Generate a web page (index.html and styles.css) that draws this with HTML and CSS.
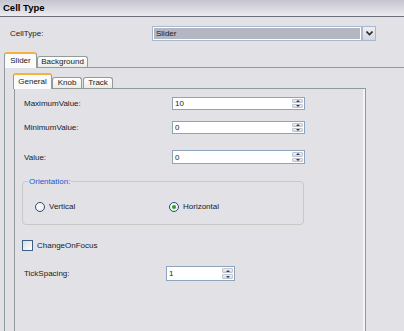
FILE: index.html
```html
<!DOCTYPE html>
<html>
<head>
<meta charset="utf-8">
<link rel="stylesheet" href="styles.css">
</head>
<body>
<div class="header">Cell Type</div>
<div class="celltype-row">
  <span class="ct-label">CellType:</span>
  <div class="combo">
    <div class="combo-field">Slider</div>
    <div class="combo-btn">
      <svg width="7" height="5" viewBox="0 0 7 5"><path d="M0.5 0.5 L3.5 3.5 L6.5 0.5" fill="none" stroke="#2b2b33" stroke-width="1.6"/></svg>
    </div>
  </div>
</div>
<div class="tabs outer-tabs">
  <div class="tab sel w-slider">Slider</div>
  <div class="tab w-bg">Background</div>
</div>
<div class="outer-page">
  <div class="tabs inner-tabs">
    <div class="tab sel w-gen">General</div>
    <div class="tab w-knob">Knob</div>
    <div class="tab w-track">Track</div>
  </div>
  <div class="inner-page">
    <div class="field-row r1">
      <span class="lbl">MaximumValue:</span>
      <div class="spin wide"><span class="val">10</span><div class="spinbtn"><span class="up"></span><span class="down"></span></div></div>
    </div>
    <div class="field-row r2">
      <span class="lbl">MinimumValue:</span>
      <div class="spin wide"><span class="val">0</span><div class="spinbtn"><span class="up"></span><span class="down"></span></div></div>
    </div>
    <div class="field-row r3">
      <span class="lbl">Value:</span>
      <div class="spin wide"><span class="val">0</span><div class="spinbtn"><span class="up"></span><span class="down"></span></div></div>
    </div>
    <div class="group">
      <span class="legend">Orientation:</span>
      <div class="radios">
        <div class="radio-item first"><span class="radio"></span><span class="rlabel">Vertical</span></div>
        <div class="radio-item"><span class="radio on"></span><span class="rlabel">Horizontal</span></div>
      </div>
    </div>
    <div class="check-row">
      <span class="checkbox"></span><span class="clabel">ChangeOnFocus</span>
    </div>
    <div class="field-row r4">
      <span class="lbl short">TickSpacing:</span>
      <div class="spin narrow"><span class="val">1</span><div class="spinbtn"><span class="up"></span><span class="down"></span></div></div>
    </div>
  </div>
</div>
</body>
</html>
```
FILE: styles.css
```css
html, body {
  margin: 0;
  padding: 0;
}
body {
  width: 404px;
  height: 331px;
  overflow: hidden;
  background: #e2e1e6;
  font-family: "Liberation Sans", Arial, sans-serif;
  font-size: 8px;
  color: #1a1a1a;
}
.header {
  height: 16px;
  line-height: 16px;
  padding-left: 3px;
  font-weight: bold;
  font-size: 9.5px;
  color: #000;
  background: linear-gradient(to bottom, #c4c4d0, #ecebf0);
  border-bottom: 1px solid #6e6e7a;
}
.celltype-row {
  display: flex;
  align-items: center;
  height: 15px;
  margin-top: 9px;
  padding-left: 10px;
}
.ct-label {
  width: 142px;
}
.combo {
  display: flex;
  width: 224px;
  height: 15px;
}
.combo-field {
  flex: 1;
  box-sizing: border-box;
  height: 15px;
  line-height: 13px;
  padding-left: 3px;
  background: #b4b6c2;
  border: 1px solid #a9b8cc;
  box-shadow: inset 0 0 0 1px #fff;
}
.combo-btn {
  box-sizing: border-box;
  width: 14px;
  height: 15px;
  border: 1px solid #a9b8cc;
  background: linear-gradient(to bottom, #eeeef3, #d6d6df);
  display: flex;
  align-items: center;
  justify-content: center;
}
.tabs {
  display: flex;
  align-items: flex-end;
  position: relative;
  z-index: 1;
}
.outer-tabs {
  margin-top: 11px;
  padding-left: 4px;
  height: 15px;
}
.tab {
  box-sizing: border-box;
  height: 11px;
  line-height: 10px;
  text-align: center;
  border: 1px solid #919b9c;
  border-bottom: none;
  border-radius: 3px 3px 0 0;
  background: linear-gradient(to bottom, #ffffff, #ecebe6);
}
.tab.sel {
  height: 16px;
  line-height: 13px;
  margin-bottom: -1px;
  border-top: 2px solid #f3b33d;
  background: #fbfbfd;
}
.w-slider { width: 33px; }
.w-bg { width: 51px; }
.w-gen { width: 39px; }
.w-knob { width: 30px; }
.w-track { width: 30px; margin-left: 1px; }
.outer-page {
  margin-left: 4px;
  border-top: 1px solid #919b9c;
  border-left: 1px solid #919b9c;
  padding-left: 9px;
  padding-top: 6px;
  height: 257px;
}
.inner-tabs {
  height: 14px;
  margin-left: -1px;
}
.inner-page {
  box-sizing: border-box;
  width: 352px;
  height: 243px;
  border: 1px solid #919b9c;
  border-bottom: none;
  box-shadow: inset -2px 0 0 #f4f4f6;
  padding-left: 9px;
  padding-top: 8px;
}
.field-row {
  display: flex;
  align-items: center;
  height: 13px;
}
.r2 { margin-top: 11px; }
.r3 { margin-top: 16px; height: 14px; }
.r4 { margin-top: 15px; height: 15px; }
.lbl {
  width: 148px;
}
.lbl.short {
  width: 142px;
}
.spin {
  box-sizing: border-box;
  display: flex;
  height: 100%;
  background: #fff;
  border: 1px solid #8ea3bc;
}
.spin.wide { width: 133px; }
.spin.narrow { width: 69px; }
.val {
  flex: 1;
  padding-left: 2px;
  display: flex;
  align-items: center;
}
.spinbtn {
  width: 11px;
  display: flex;
  flex-direction: column;
  padding: 1px;
  gap: 1px;
}
.spinbtn span {
  flex: 1;
  background: linear-gradient(to bottom, #f2f2f6, #d7d9e2);
  border: 1px solid #c0c5d2;
  border-radius: 1px;
  position: relative;
}
.spinbtn span::after {
  content: "";
  position: absolute;
  left: 50%;
  top: 50%;
  margin-left: -2px;
  margin-top: -1px;
  border-left: 2px solid transparent;
  border-right: 2px solid transparent;
}
.spinbtn .up::after {
  border-bottom: 2px solid #3a3a44;
}
.spinbtn .down::after {
  border-top: 2px solid #3a3a44;
}
.group {
  box-sizing: border-box;
  margin-top: 17px;
  margin-left: -2px;
  width: 282px;
  height: 44px;
  border: 1px solid #c8c8c4;
  border-radius: 4px;
}
.legend {
  display: block;
  width: fit-content;
  margin: -5px 0 0 5px;
  padding: 0 1px;
  line-height: 9px;
  background: #e2e1e6;
  color: #1f52d4;
}
.radios {
  display: flex;
  align-items: center;
  margin-top: 15px;
  padding-left: 12px;
  height: 11px;
}
.radio-item {
  display: flex;
  align-items: center;
}
.radio-item.first {
  width: 134px;
}
.radio {
  box-sizing: border-box;
  width: 10px;
  height: 10px;
  border-radius: 50%;
  border: 1px solid #2b4f78;
  background: radial-gradient(circle at 35% 35%, #ffffff, #e4e4ea);
  display: flex;
  align-items: center;
  justify-content: center;
}
.radio.on::after {
  content: "";
  width: 4px;
  height: 4px;
  border-radius: 50%;
  background: #2aa22a;
}
.rlabel {
  margin-left: 4px;
}
.check-row {
  display: flex;
  align-items: center;
  margin-top: 15px;
  margin-left: -2px;
  height: 11px;
}
.checkbox {
  box-sizing: border-box;
  width: 11px;
  height: 11px;
  border: 1px solid #3d6088;
  background: linear-gradient(135deg, #dcdce2, #ffffff);
}
.clabel {
  margin-left: 4px;
}
```
